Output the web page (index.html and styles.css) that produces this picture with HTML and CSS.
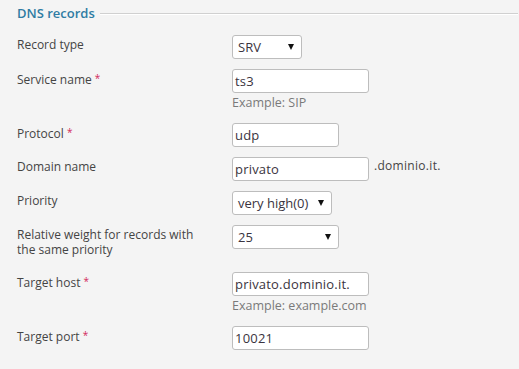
FILE: index.html
```html
<!DOCTYPE html>
<html lang="en">
<head>
<meta charset="utf-8">
<title>DNS records</title>
<link rel="stylesheet" href="styles.css">
</head>
<body>
<section class="panel">
  <div class="legend"><span class="legend-text">DNS records</span><span class="legend-line"></span></div>
  <form class="form">
    <div class="row">
      <label class="label">Record type</label>
      <div class="field">
        <div class="select w70"><span>SRV</span><i class="arrow"></i></div>
      </div>
    </div>
    <div class="row">
      <label class="label">Service name <span class="req">*</span></label>
      <div class="field">
        <div class="input w137">ts3</div>
        <div class="hint">Example: SIP</div>
      </div>
    </div>
    <div class="row">
      <label class="label">Protocol <span class="req">*</span></label>
      <div class="field">
        <div class="input w107">udp</div>
      </div>
    </div>
    <div class="row">
      <label class="label">Domain name</label>
      <div class="field inline">
        <div class="input w137">privato</div>
        <span class="suffix">.dominio.it.</span>
      </div>
    </div>
    <div class="row">
      <label class="label">Priority</label>
      <div class="field">
        <div class="select w100"><span>very high(0)</span><i class="arrow"></i></div>
      </div>
    </div>
    <div class="row">
      <label class="label">Relative weight for records with the same priority</label>
      <div class="field">
        <div class="select w107"><span>25</span><i class="arrow"></i></div>
      </div>
    </div>
    <div class="row">
      <label class="label">Target host <span class="req">*</span></label>
      <div class="field">
        <div class="input w137">privato.dominio.it.</div>
        <div class="hint">Example: example.com</div>
      </div>
    </div>
    <div class="row">
      <label class="label">Target port <span class="req">*</span></label>
      <div class="field">
        <div class="input w137">10021</div>
      </div>
    </div>
  </form>
</section>
</body>
</html>
```

FILE: styles.css
```css
html, body {
  margin: 0;
  padding: 0;
  background: #f4f4f4;
}
body {
  font-family: "Open Sans", "DejaVu Sans", sans-serif;
  font-size: 12px;
  color: #444;
}
.panel {
  padding: 5px 1px 0 17px;
}
.legend {
  display: flex;
  align-items: center;
  height: 16px;
  margin-bottom: 14px;
}
.legend-text {
  color: #2f7ca3;
  font-size: 13px;
  font-weight: 600;
  line-height: 16px;
  padding-right: 5px;
}
.legend-line {
  flex: 1;
  height: 1px;
  background: #d0d0d0;
  box-shadow: 0 1px 0 #fff;
}
.form {
  margin: 0;
}
.row {
  display: grid;
  grid-template-columns: 215px auto;
  margin-bottom: 10px;
}
.label {
  padding: 2px 18px 5px 0;
  line-height: 15px;
  color: #444;
}
.req {
  color: #d2285a;
  font-size: 10px;
  vertical-align: 2px;
}
.field.inline {
  display: flex;
  align-items: flex-start;
}
.input, .select {
  box-sizing: border-box;
  height: 24px;
  background: #fff;
  border: 1px solid #bdbdbd;
  border-radius: 3px;
  color: #3a3440;
  font-size: 13px;
  line-height: 22px;
  white-space: nowrap;
  overflow: hidden;
}
.input {
  padding-left: 2px;
  letter-spacing: 0.2px;
}
.select {
  display: flex;
  align-items: center;
  justify-content: space-between;
  padding: 0 7px 0 5px;
}
.arrow {
  width: 0;
  height: 0;
  border-left: 3.5px solid transparent;
  border-right: 3.5px solid transparent;
  border-top: 6px solid #111;
}
.w70 { width: 70px; }
.w100 { width: 100px; }
.w107 { width: 107px; }
.w137 { width: 137px; }
.hint {
  color: #7a7a7a;
  font-size: 12.5px;
  line-height: 20px;
}
.suffix {
  padding-left: 5px;
  line-height: 17px;
  color: #444;
  letter-spacing: 0.3px;
}
```
